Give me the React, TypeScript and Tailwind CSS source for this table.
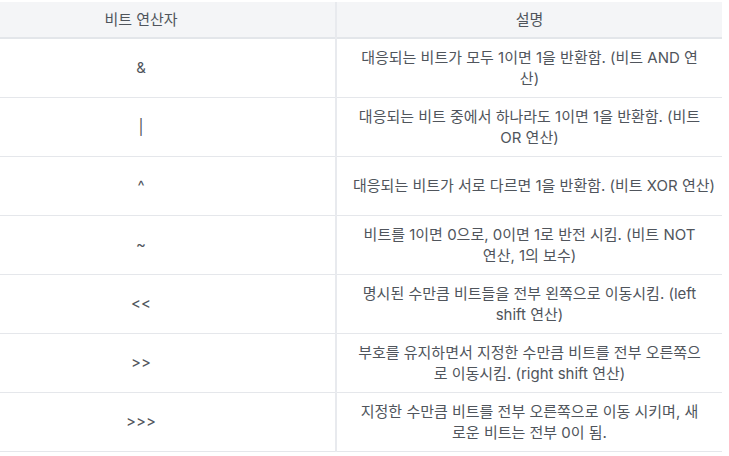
const rows: { op: string; desc: string[] }[] = [
  { op: '&', desc: ['대응되는 비트가 모두 1이면 1을 반환함. (비트 AND 연', '산)'] },
  { op: '|', desc: ['대응되는 비트 중에서 하나라도 1이면 1을 반환함. (비트', 'OR 연산)'] },
  { op: '^', desc: ['대응되는 비트가 서로 다르면 1을 반환함. (비트 XOR 연산)'] },
  { op: '~', desc: ['비트를 1이면 0으로, 0이면 1로 반전 시킴. (비트 NOT', '연산, 1의 보수)'] },
  { op: '<<', desc: ['명시된 수만큼 비트들을 전부 왼쪽으로 이동시킴. (left', 'shift 연산)'] },
  { op: '>>', desc: ['부호를 유지하면서 지정한 수만큼 비트를 전부 오른쪽으', '로 이동시킴. (right shift 연산)'] },
  { op: '>>>', desc: ['지정한 수만큼 비트를 전부 오른쪽으로 이동 시키며, 새', '로운 비트는 전부 0이 됨.'] },
];

export default function App() {
  return (
    <div
      className="bg-white pt-[2px] text-[15px] leading-[21px] text-[#50555c] overflow-hidden h-[456px]"
      style={{ fontFamily: 'Inter, "Noto Sans CJK KR", sans-serif' }}
    >
      <table className="ml-[-53px] w-[775px] border-collapse table-fixed">
        <colgroup>
          <col className="w-[389px]" />
          <col />
        </colgroup>
        <thead>
          <tr className="h-[36px] bg-[#f4f5f7] border-b-2 border-[#e3e6ea]">
            <th className="font-normal text-center border-r-2 border-[#e8eaee]">비트 연산자</th>
            <th className="font-normal text-center">설명</th>
          </tr>
        </thead>
        <tbody>
          {rows.map((r) => (
            <tr key={r.op} className="h-[59px] border-b border-[#e5e7eb]">
              <td className="text-center align-middle border-r-2 border-[#e8eaee]">{r.op}</td>
              <td className="text-center align-middle px-4">
                {r.desc.map((line, i) => (
                  <div key={i} className="whitespace-nowrap">
                    {line}
                  </div>
                ))}
              </td>
            </tr>
          ))}
        </tbody>
      </table>
    </div>
  );
}
